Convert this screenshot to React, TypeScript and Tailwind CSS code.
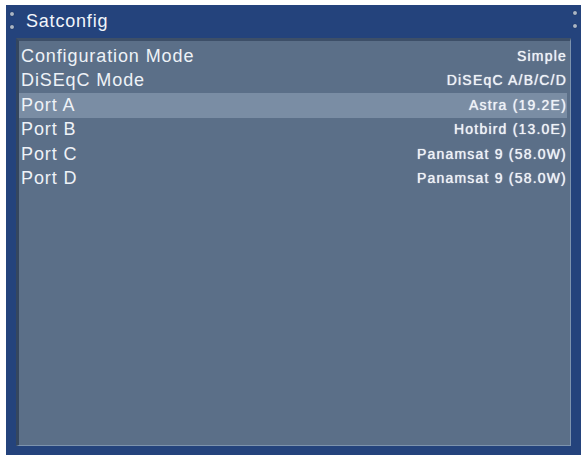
import React from "react";

const rows = [
  { label: "Configuration Mode", value: "Simple" },
  { label: "DiSEqC Mode", value: "DiSEqC A/B/C/D" },
  { label: "Port A", value: "Astra (19.2E)" },
  { label: "Port B", value: "Hotbird (13.0E)" },
  { label: "Port C", value: "Panamsat 9 (58.0W)" },
  { label: "Port D", value: "Panamsat 9 (58.0W)" },
];

const selected = 2;

function Dot() {
  return <span className="block w-[4px] h-[4px] rounded-full bg-[#aab6c6] shadow-[0_0_1px_#0b1a3a]" />;
}

export default function App() {
  return (
    <div
      className="w-[581px] h-[457px] bg-white pt-[5px] pl-[6px] pb-[2px]"
      style={{ fontFamily: '"Liberation Sans", Arial, sans-serif' }}
    >
      <div className="w-full h-full bg-[#24437c] flex flex-col">
        {/* title bar */}
        <div className="relative h-[33px] flex items-center pl-[20px] text-[18px] tracking-[0.8px] text-[#f2f5fa]">
          Satconfig
          <div className="absolute left-[4px] top-[7px] flex flex-col gap-[9px]">
            <Dot />
            <Dot />
          </div>
          <div className="absolute right-[4px] top-[6px] flex flex-col gap-[9px]">
            <Dot />
            <Dot />
          </div>
        </div>

        {/* content panel */}
        <div className="mx-[10px] mb-[9px] flex-1 bg-[#5b6f88] border-t-[3px] border-l-[3px] border-t-[#3d4f68] border-l-[#34465f] border-r border-b border-r-[#7d93ad] border-b-[#7d93ad] pt-[3px] pr-[3px]">
          {rows.map((r, i) => (
            <div
              key={r.label}
              className={
                "h-[24.5px] flex items-center justify-between pl-[2px] " +
                (i === selected ? "bg-[#7a8da4]" : "")
              }
            >
              <span className="text-[18px] tracking-[0.9px] text-[#eef2f7]">{r.label}</span>
              <span className="text-[14px] tracking-[1.2px] text-[#eef2f7] [text-shadow:0_0_1px_#ffffff]">{r.value}</span>
            </div>
          ))}
        </div>
      </div>
    </div>
  );
}
